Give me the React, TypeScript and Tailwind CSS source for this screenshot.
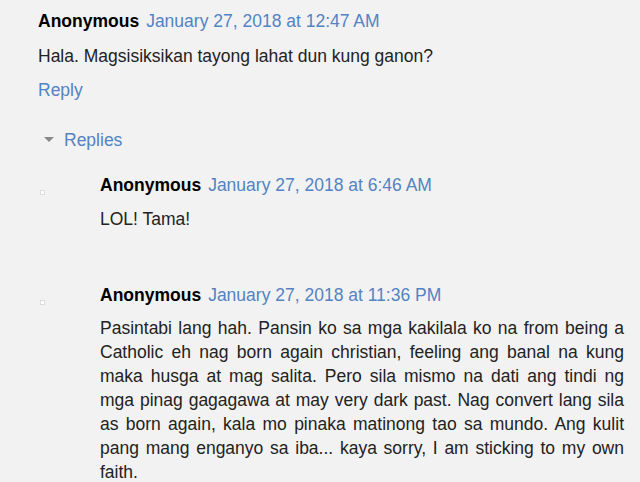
import React from 'react';

const blue = 'text-[#5283c4]';

function Avatar({ top }: { top: string }) {
  return (
    <div className="w-[100px] shrink-0">
      <div className={`ml-[40px] ${top} w-[5px] h-[5px] bg-white border border-[#dcdcdc]`} />
    </div>
  );
}

function Header({ date }: { date: string }) {
  return (
    <div className="flex items-baseline gap-[7px] leading-[24px]">
      <span className="font-bold text-black">Anonymous</span>
      <a className={blue}>{date}</a>
    </div>
  );
}

export default function App() {
  return (
    <div
      className="w-[640px] h-[482px] overflow-hidden bg-[#f2f2f2] text-[17.5px] text-[#222] pl-[38px] pr-[16px] pt-[9px]"
      style={{ fontFamily: '"Liberation Sans", Arial, sans-serif' }}
    >
      <Header date="January 27, 2018 at 12:47 AM" />
      <p className="mt-[11px] leading-[24px]">Hala. Magsisiksikan tayong lahat dun kung ganon?</p>
      <a className={`block mt-[10px] leading-[24px] ${blue}`}>Reply</a>

      <div className="mt-[26px] flex items-center leading-[24px]">
        <span className="w-0 h-0 ml-[6px] mr-[10px] border-l-[5px] border-r-[5px] border-t-[5px] border-l-transparent border-r-transparent border-t-[#888] -translate-y-[1px]" />
        <a className={blue}>Replies</a>
      </div>

      <div className="-ml-[38px] mt-[21px] flex">
        <Avatar top="mt-[17px]" />
        <div className="flex-1">
          <Header date="January 27, 2018 at 6:46 AM" />
          <p className="mt-[10px] leading-[24px]">LOL! Tama!</p>
        </div>
      </div>

      <div className="-ml-[38px] mt-[52px] flex">
        <Avatar top="mt-[17px]" />
        <div className="flex-1">
          <Header date="January 27, 2018 at 11:36 PM" />
          <p className="mt-[9px] leading-[24px] text-justify">
            Pasintabi lang hah. Pansin ko sa mga kakilala ko na from being a Catholic eh nag born again christian,
            feeling ang banal na kung maka husga at mag salita. Pero sila mismo na dati ang tindi ng mga pinag
            gagagawa at may very dark past. Nag convert lang sila as born again, kala mo pinaka matinong tao sa
            mundo. Ang kulit pang mang enganyo sa iba... kaya sorry, I am sticking to my own faith.
          </p>
        </div>
      </div>
    </div>
  );
}
